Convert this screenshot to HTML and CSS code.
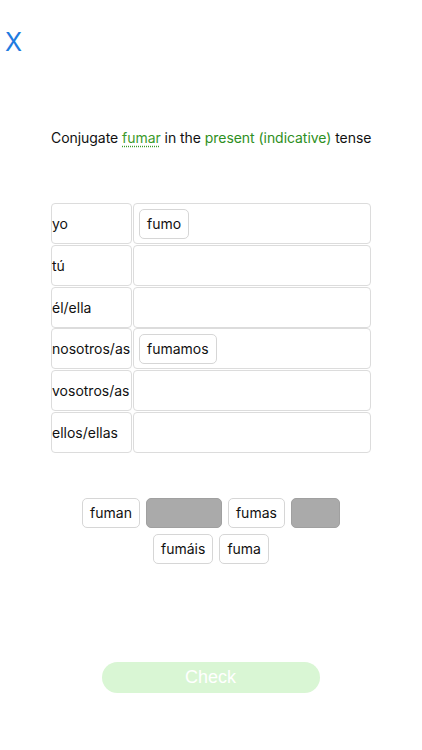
FILE: index.html
```html
<!DOCTYPE html>
<html>
<head>
<meta charset="utf-8">
<link rel="stylesheet" href="styles.css">
</head>
<body>
<div class="app">
  <div class="close">X</div>
  <p class="prompt">Conjugate <span class="verb">fumar</span> in the <span class="tense">present (indicative)</span> tense</p>
  <div class="table">
    <div class="pron">yo</div><div class="slot"><span class="chip">fumo</span></div>
    <div class="pron">tú</div><div class="slot"></div>
    <div class="pron">él/ella</div><div class="slot"></div>
    <div class="pron">nosotros/as</div><div class="slot"><span class="chip">fumamos</span></div>
    <div class="pron">vosotros/as</div><div class="slot"></div>
    <div class="pron">ellos/ellas</div><div class="slot"></div>
  </div>
  <div class="bank">
    <div class="bank-row">
      <span class="chip">fuman</span>
      <span class="chip used w75"></span>
      <span class="chip">fumas</span>
      <span class="chip used w48"></span>
    </div>
    <div class="bank-row">
      <span class="chip">fumáis</span>
      <span class="chip">fuma</span>
    </div>
  </div>
  <div class="footer">
    <button class="check">Check</button>
  </div>
</div>
</body>
</html>
```

FILE: styles.css
```css
html, body {
  margin: 0;
  padding: 0;
  background: #fff;
}
body {
  font-family: Inter, "Liberation Sans", sans-serif;
  color: #111;
}
.app {
  width: 422px;
  height: 750px;
  display: flex;
  flex-direction: column;
}
.close {
  color: #1e7be0;
  font-size: 25px;
  line-height: 24px;
  margin: 30px 0 0 5px;
  font-weight: 400;
}
.prompt {
  margin: 74px 0 0 51px;
  font-size: 14px;
  line-height: 20px;
  letter-spacing: -0.05px;
}
.verb {
  color: #3c9a2c;
  text-decoration: underline dotted #3c9a2c;
  text-underline-offset: 3px;
}
.tense {
  color: #2e8f22;
}
.table {
  margin: 55px 0 0 51px;
  width: 320px;
  display: grid;
  grid-template-columns: 81px 238px;
  grid-auto-rows: 41px;
  column-gap: 1px;
  row-gap: 0.8px;
}
.pron, .slot {
  border: 1px solid #dcdcdc;
  border-radius: 4px;
  box-sizing: border-box;
  display: flex;
  align-items: center;
  font-size: 14px;
}
.pron {
  padding-left: 0;
}
.slot {
  padding-left: 5px;
}
.chip {
  display: inline-flex;
  align-items: center;
  justify-content: center;
  box-sizing: border-box;
  height: 30px;
  padding: 0 7px;
  border: 1px solid #d6d6d6;
  border-radius: 5px;
  font-size: 14px;
  background: #fff;
}
.chip.used {
  background: #aaaaaa;
  border-color: #a0a0a0;
}
.w75 { width: 76px; }
.w48 { width: 49px; }
.bank {
  margin-top: 45px;
  display: flex;
  flex-direction: column;
  align-items: center;
  gap: 6px;
}
.bank-row {
  display: flex;
  gap: 6px;
  padding-left: 0;
}
.footer {
  margin-top: 98px;
  display: flex;
  justify-content: center;
}
.check {
  width: 218px;
  height: 31px;
  border: none;
  border-radius: 16px;
  background: #d9f6d4;
  color: #fff;
  font-family: "Liberation Sans", sans-serif;
  font-size: 18px;
  margin-left: -1px;
}
```
